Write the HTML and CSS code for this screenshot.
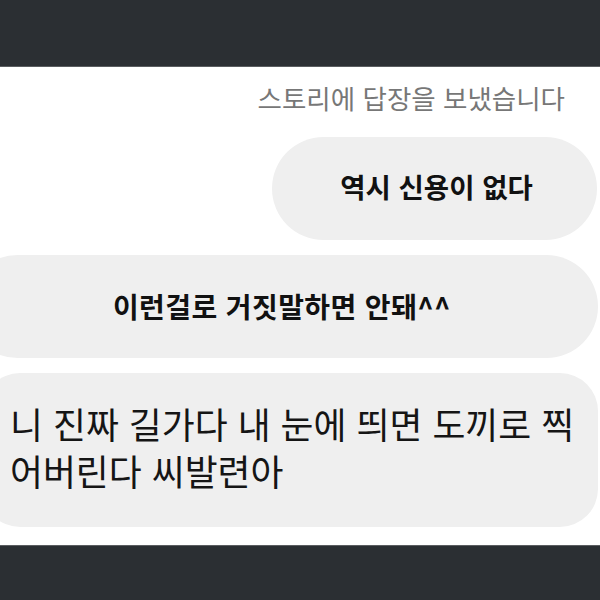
FILE: index.html
```html
<!DOCTYPE html>
<html lang="ko">
<head>
<meta charset="utf-8">
<link rel="stylesheet" href="styles.css">
</head>
<body>
<div class="screen">
  <div class="bar bar-top"></div>
  <main class="chat">
    <div class="status">스토리에 답장을 보냈습니다</div>
    <div class="bubble b1">역시 신용이 없다</div>
    <div class="bubble b2">이런걸로 거짓말하면 안돼^^</div>
    <div class="bubble b3">니 진짜 길가다 내 눈에 띄면 도끼로 찍<br>어버린다 씨발련아</div>
  </main>
  <div class="bar bar-bottom"></div>
</div>
</body>
</html>
```
FILE: styles.css
```css
html, body {
  margin: 0;
  padding: 0;
  background: #ffffff;
}
.screen {
  width: 600px;
  height: 600px;
  display: flex;
  flex-direction: column;
  overflow: hidden;
  font-family: "Noto Sans CJK KR", "Noto Sans", sans-serif;
}
.bar {
  background: #2b2f33;
  flex: none;
}
.bar-top {
  height: 66px;
  border-bottom: 1px solid #5a5d60;
}
.bar-bottom {
  height: 54px;
  border-top: 1px solid #5a5d60;
}
.chat {
  flex: 1;
  display: flex;
  flex-direction: column;
  overflow: hidden;
  padding-top: 12px;
}
.status {
  align-self: flex-end;
  margin-right: 35px;
  font-size: 26.5px;
  line-height: 38px;
  color: #777777;
}
.bubble {
  background: #efefef;
  color: #111;
  display: flex;
  align-items: center;
  justify-content: center;
  white-space: nowrap;
  box-sizing: border-box;
}
.b1 {
  margin-top: 20px;
  margin-left: 272px;
  margin-right: 3px;
  height: 103px;
  border-radius: 52px;
  font-weight: 700;
  font-size: 27.5px;
  padding-left: 4px;
  padding-bottom: 5px;
}
.b2 {
  margin-top: 15px;
  margin-left: -34px;
  margin-right: 2px;
  height: 103px;
  border-radius: 52px;
  font-weight: 700;
  font-size: 28px;
  letter-spacing: 0.4px;
  padding-bottom: 2px;
}
.b3 {
  margin-top: 15px;
  margin-left: -18px;
  margin-right: 2px;
  height: 154px;
  border-radius: 38px;
  justify-content: flex-start;
  padding-left: 28px;
  padding-bottom: 6px;
  font-size: 35.8px;
  line-height: 47px;
  color: #151515;
}
```
